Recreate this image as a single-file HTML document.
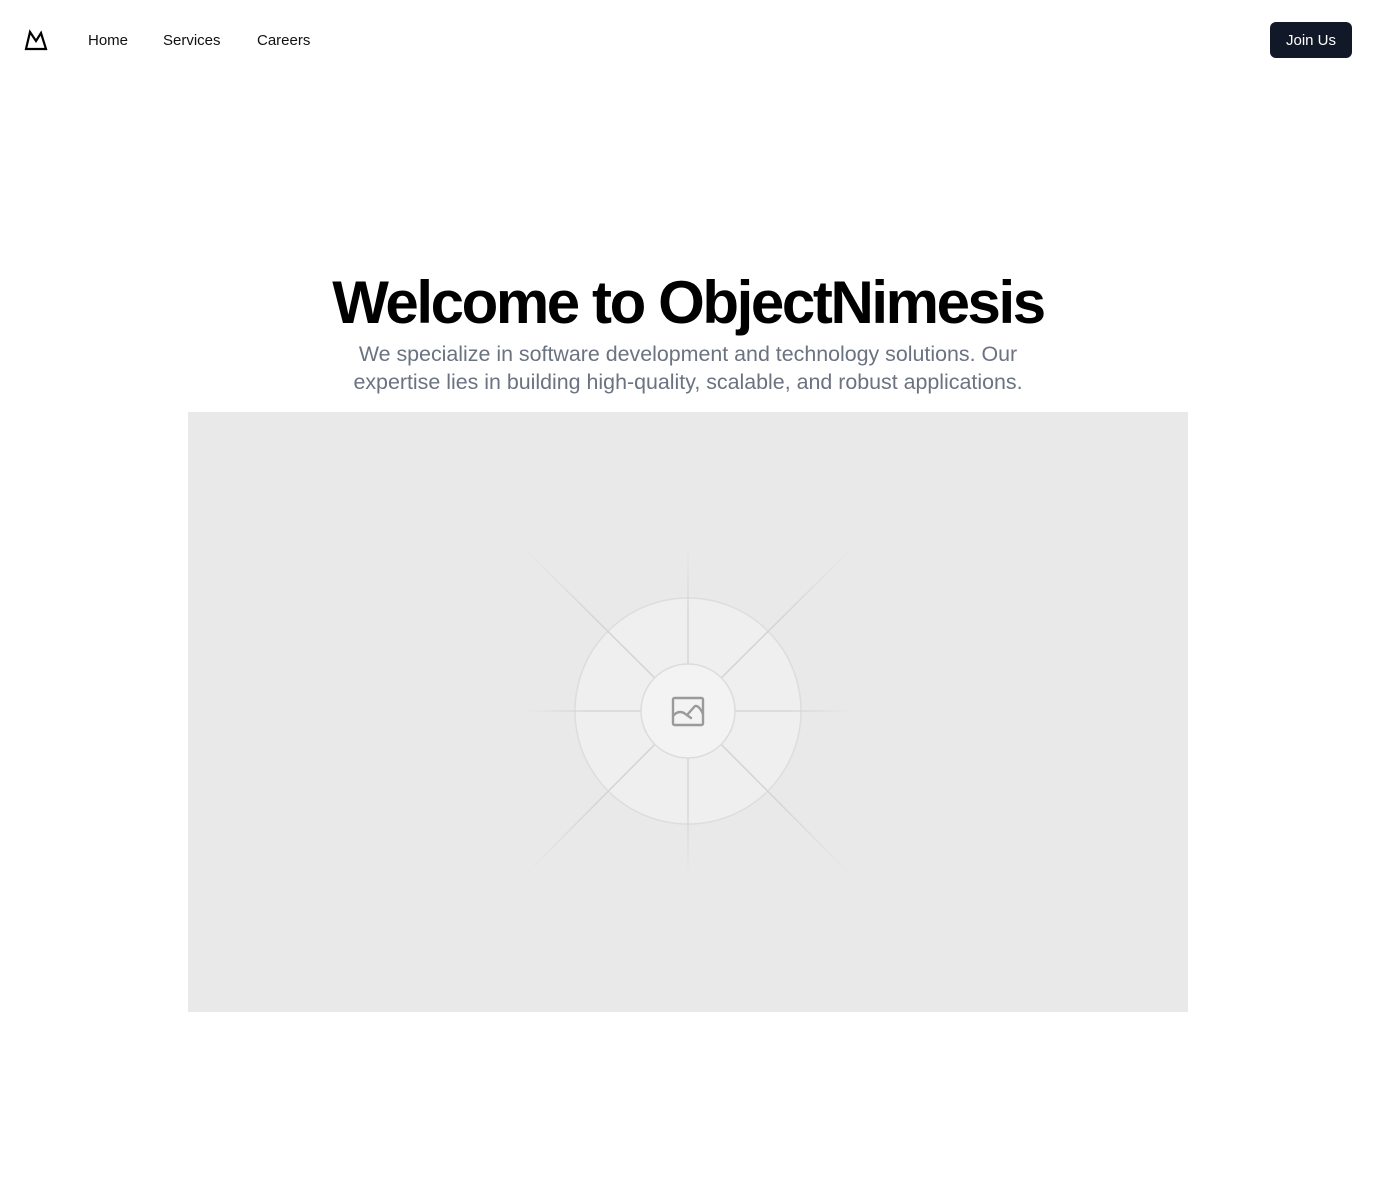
<!DOCTYPE html>
<html><head><meta charset="utf-8"><style>
*{margin:0;padding:0;box-sizing:border-box}
body{width:1376px;height:1204px;background:#fff;font-family:"Liberation Sans",sans-serif;position:relative;overflow:hidden}
.nav a{position:absolute;top:32px;font-size:15px;color:#111;text-decoration:none}
.btn{position:absolute;left:1270px;top:22px;width:82px;height:36px;background:#111827;color:#fff;border-radius:6px;font-size:15px;text-align:center;line-height:37px}
h1{position:absolute;left:0;width:1376px;top:268px;text-align:center;font-size:60px;font-weight:bold;letter-spacing:-2.4px;color:#000;line-height:70px}
p{position:absolute;left:0;width:1376px;top:340px;text-align:center;font-size:21.4px;color:#6b7280;line-height:28px}
.img{position:absolute;left:188px;top:412px;width:1000px;height:600px;background:#e9e9e9}
</style></head><body>
<svg style="position:absolute;left:24px;top:29px" width="24" height="22" viewBox="0 0 24 22"><path d="M2 20 L6 3 L12 12 L17 4 L22 20 Z" fill="none" stroke="#000" stroke-width="2.2" stroke-linejoin="miter"/></svg>
<div class="nav"><a style="left:88px">Home</a><a style="left:163px">Services</a><a style="left:257px">Careers</a></div>
<div class="btn">Join Us</div>
<h1>Welcome to ObjectNimesis</h1>
<p>We specialize in software development and technology solutions. Our<br>expertise lies in building high-quality, scalable, and robust applications.</p>
<div class="img">
<svg width="1000" height="600" style="position:absolute;left:0;top:0">
<defs>
<radialGradient id="g" cx="500" cy="299" r="165" gradientUnits="userSpaceOnUse"><stop offset="0.6" stop-color="#d6d6d6"/><stop offset="1" stop-color="#d6d6d6" stop-opacity="0"/></radialGradient>
<radialGradient id="g2" cx="500" cy="299" r="228" gradientUnits="userSpaceOnUse"><stop offset="0.55" stop-color="#d4d4d4"/><stop offset="1" stop-color="#d4d4d4" stop-opacity="0"/></radialGradient>
</defs>
<circle cx="500" cy="299" r="113" fill="#efefef" stroke="#dddddd" stroke-width="1.5"/>
<g stroke="url(#g)" stroke-width="1.5">
<line x1="500" y1="299" x2="500" y2="135"/><line x1="500" y1="299" x2="500" y2="463"/>
<line x1="500" y1="299" x2="336" y2="299"/><line x1="500" y1="299" x2="664" y2="299"/>
</g>
<g stroke="url(#g2)" stroke-width="1.5">
<line x1="500" y1="299" x2="340" y2="140"/><line x1="500" y1="299" x2="660" y2="140"/>
<line x1="500" y1="299" x2="340" y2="460"/><line x1="500" y1="299" x2="660" y2="460"/>
</g>
<circle cx="500" cy="299" r="47" fill="#f3f3f3" stroke="#dcdcdc" stroke-width="1.5"/>
<g fill="none" stroke="#9a9a9a" stroke-width="2.4" stroke-linejoin="round" stroke-linecap="round">
<rect x="485" y="286" width="30" height="27" rx="1.5"/>
<path d="M485 304 Q490 298 496 301 L503 306 M499 303 L507 294 Q511 293 515 302"/>
</g>
</svg>
</div>
</body></html>
